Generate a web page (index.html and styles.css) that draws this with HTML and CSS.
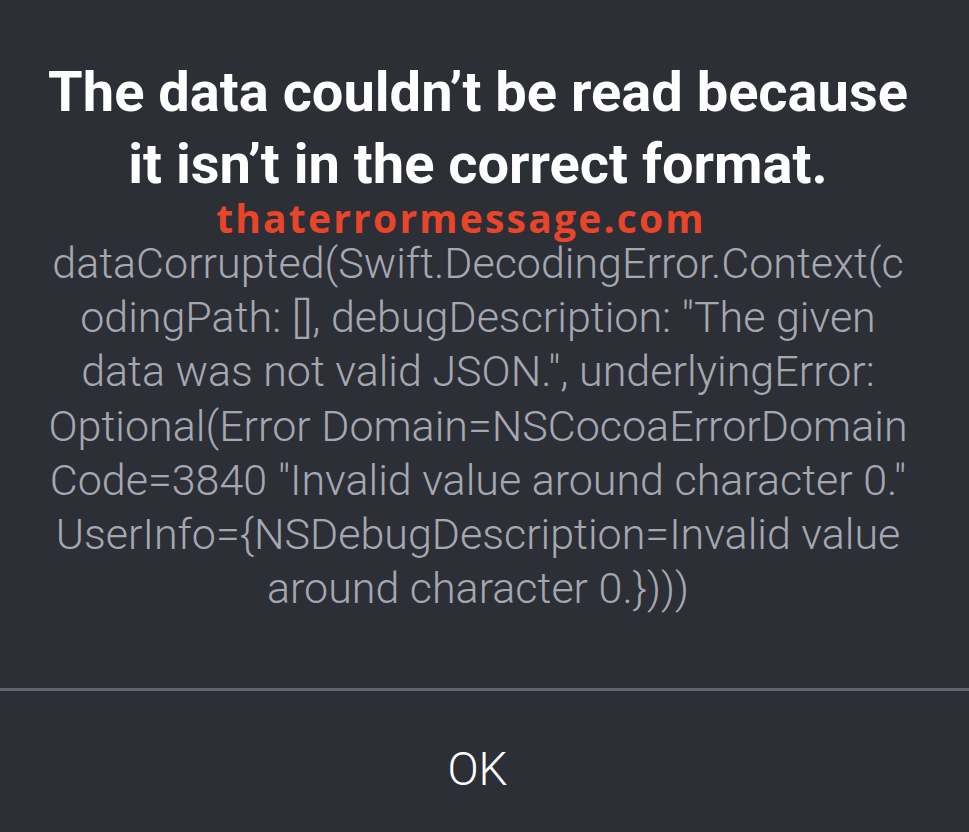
FILE: index.html
```html
<!DOCTYPE html>
<html>
<head>
<meta charset="utf-8">
<link rel="stylesheet" href="styles.css">
</head>
<body>
<div class="alert">
  <div class="content">
    <h1 class="title"><span class="line">The data couldn’t be read because</span><span class="line">it isn’t in the correct format.</span></h1>
    <div class="watermark">thaterrormessage.com</div>
    <p class="message">
      <span class="line">dataCorrupted(Swift.DecodingError.Context(c</span>
      <span class="line">odingPath: [], debugDescription: "The given</span>
      <span class="line">data was not valid JSON.", underlyingError:</span>
      <span class="line">Optional(Error Domain=NSCocoaErrorDomain</span>
      <span class="line">Code=3840 "Invalid value around character 0."</span>
      <span class="line">UserInfo={NSDebugDescription=Invalid value</span>
      <span class="line">around character 0.})))</span>
    </p>
  </div>
  <div class="actions">
    <button class="ok">OK</button>
  </div>
</div>
</body>
</html>
```
FILE: styles.css
```css
html, body {
  margin: 0;
  padding: 0;
  background: #2d2f36;
}
.alert {
  width: 969px;
  height: 832px;
  display: flex;
  flex-direction: column;
  background: #2d2f36;
  font-family: Roboto, "Liberation Sans", sans-serif;
}
.content {
  height: 691px;
  box-sizing: border-box;
  padding: 56px 13px 0 0;
  display: flex;
  flex-direction: column;
  align-items: center;
  border-bottom: 3px solid #62636f;
}
.line {
  display: block;
  white-space: nowrap;
}
.title {
  margin: 0;
  color: #ffffff;
  font-size: 56px;
  font-weight: 700;
  line-height: 72px;
  text-align: center;
}
.watermark {
  margin: 0 34px 0 0;
  color: #e8452a;
  font-family: "Open Sans", Roboto, sans-serif;
  font-size: 39px;
  font-weight: 700;
  line-height: 36px;
  letter-spacing: 2.2px;
}
.message {
  margin: 0;
  color: #a5a8b1;
  font-size: 43px;
  font-weight: 300;
  line-height: 54.2px;
  text-align: center;
}
.actions {
  flex: 1;
  display: flex;
  align-items: center;
  justify-content: center;
}
.ok {
  background: none;
  border: none;
  color: #ffffff;
  font-family: Roboto, "Liberation Sans", sans-serif;
  font-size: 46px;
  font-weight: 300;
  padding: 0;
  margin: 14px 14px 0 0;
}
```
